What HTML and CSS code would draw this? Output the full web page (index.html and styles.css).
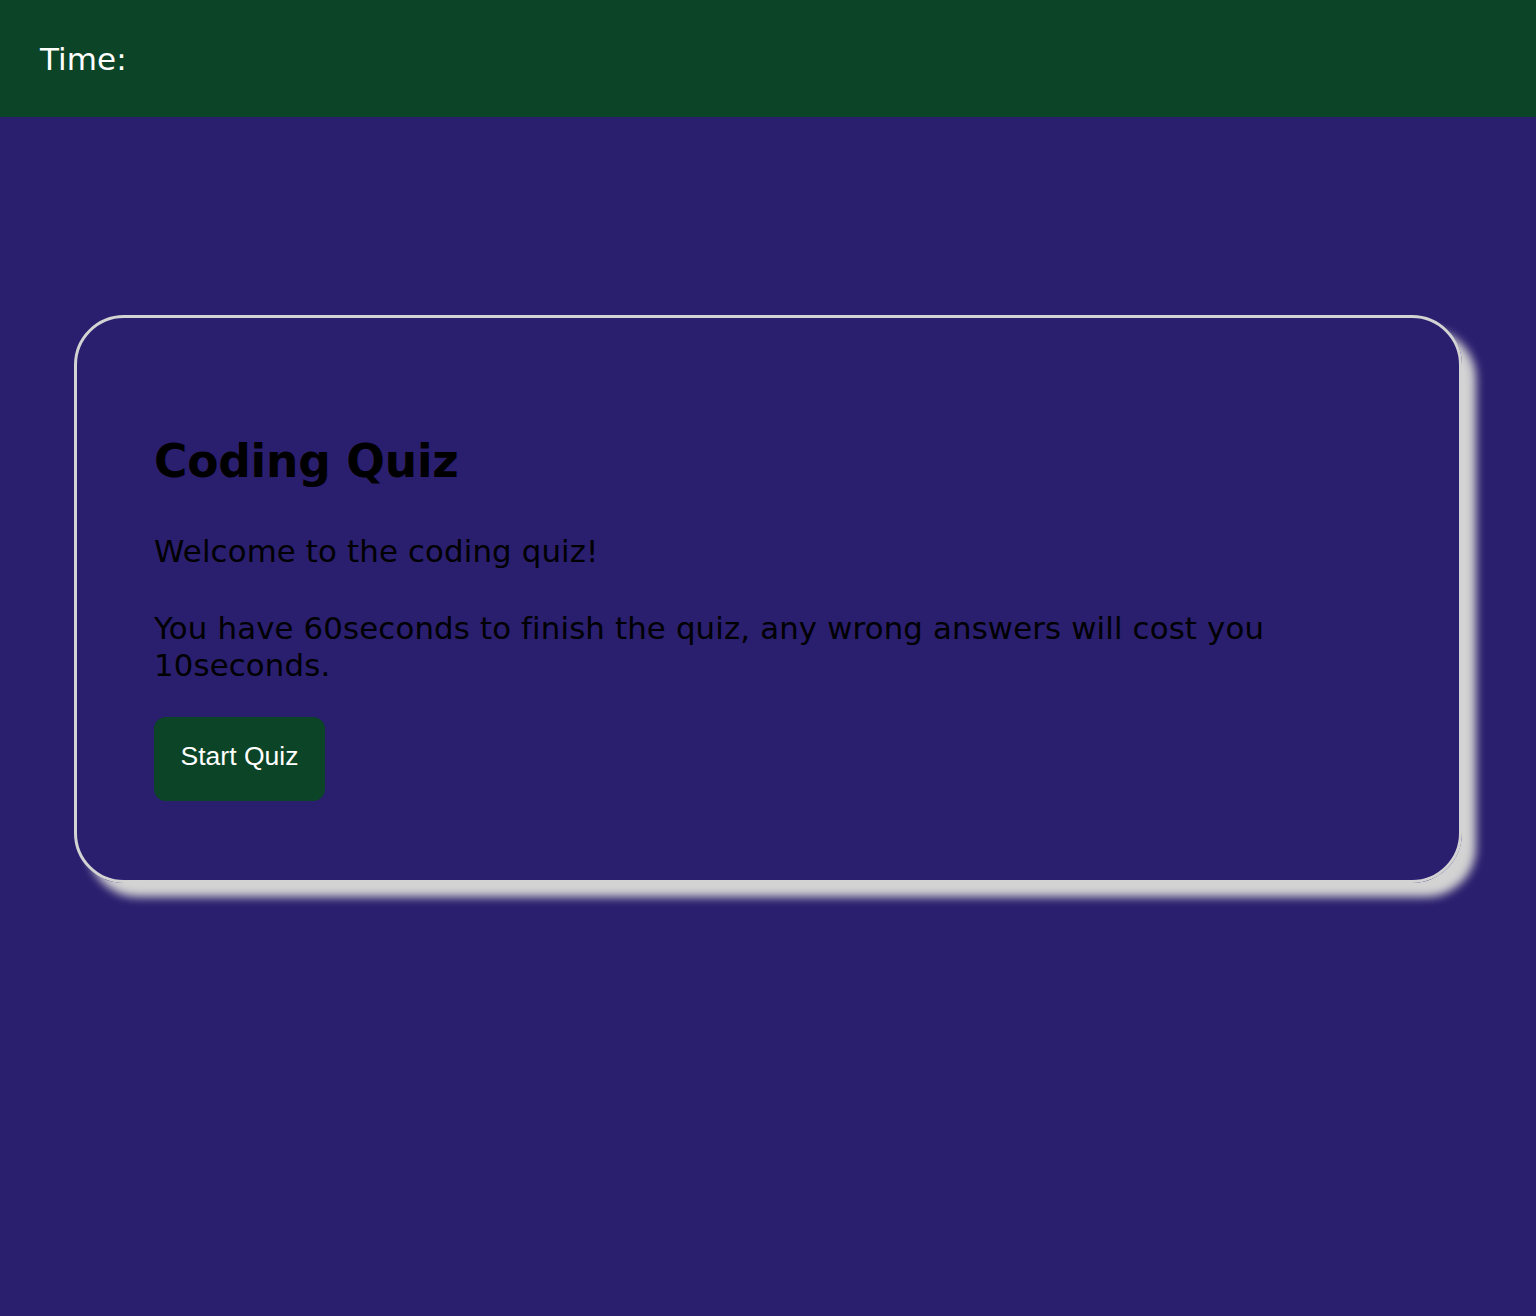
FILE: index.html
```html
<!DOCTYPE html>
<html lang="en">
<head>
<meta charset="utf-8">
<title>Coding Quiz</title>
<link rel="stylesheet" href="styles.css">
</head>
<body>
<header class="topbar">
  <div class="timer">Time: <span class="time-left"></span></div>
</header>
<main class="main">
  <section class="card">
    <h1 class="title">Coding Quiz</h1>
    <p class="intro">Welcome to the coding quiz!</p>
    <p class="rules">You have 60seconds to finish the quiz, any wrong answers will cost you 10seconds.</p>
    <button class="start-btn" type="button">Start Quiz</button>
  </section>
</main>
</body>
</html>
```
FILE: styles.css
```css
html, body {
  margin: 0;
  padding: 0;
}

body {
  background: #2a1e6e;
  font-family: "DejaVu Sans", Verdana, sans-serif;
  min-height: 1316px;
}

.topbar {
  background: #0b4426;
  padding: 41px 40px 40px;
}

.timer {
  color: #ffffff;
  font-size: 31px;
  line-height: 36px;
  letter-spacing: 0.1px;
}

.main {
  padding: 198px 74px 0;
}

.card {
  border: 3px solid #d3d3d3;
  border-radius: 50px;
  box-shadow: 14px 14px 10px #d3d3d3;
  padding: 117px 77px 79px;
}

.title {
  margin: 0 0 44px;
  font-size: 45.5px;
  line-height: 54px;
  font-weight: bold;
  color: #000;
  letter-spacing: -0.2px;
}

.intro,
.rules {
  margin: 0;
  font-size: 30.8px;
  line-height: 37px;
  color: #000;
  letter-spacing: 0.15px;
}

.intro {
  margin-bottom: 40px;
}

.rules {
  margin-bottom: 33px;
}

.start-btn {
  display: block;
  background: #0b4426;
  color: #ffffff;
  border: none;
  border-radius: 12px;
  font-family: "Liberation Sans", Arial, sans-serif;
  font-size: 26.5px;
  width: 171px;
  height: 84px;
  padding: 0 0 6px;
  cursor: pointer;
}
```
